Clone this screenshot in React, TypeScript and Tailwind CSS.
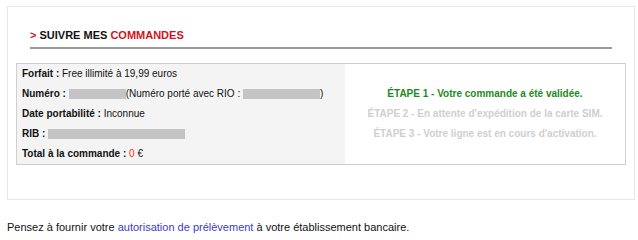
import React from "react";

const Bar = ({ w }: { w: number }) => (
  <span className="inline-block h-[10px] bg-[#c4c4c4] align-[-2px]" style={{ width: w }} />
);

export default function App() {
  return (
    <div className="w-[638px] h-[240px] bg-white pt-[6px] pl-[7px] font-['Liberation_Sans',Arial,sans-serif] text-[10px] text-[#111]">
      <div className="w-[628px] h-[194px] border border-[#e6e6e6] pt-[21px]">
        <div className="mx-[22px] border-b-2 border-[#999] pb-[5px]">
          <div className="text-[11px] font-bold leading-[14px]">
            <span className="text-[#d0141c]">&gt;</span> SUIVRE MES <span className="text-[#d0141c]">COMMANDES</span>
          </div>
        </div>
        <div className="mx-[8px] mt-[14px] border border-[#cfcfcf] flex h-[102px]">
          <div className="w-[328px] bg-[#f4f4f4] pl-[5px] flex flex-col">
            <div className="h-[20px] leading-[20px]"><b>Forfait :</b> Free illimité à 19,99 euros</div>
            <div className="h-[20px] leading-[20px]"><b>Numéro :</b> <Bar w={57} />(Numéro porté avec RIO : <Bar w={77} />)</div>
            <div className="h-[20px] leading-[20px]"><b>Date portabilité :</b> Inconnue</div>
            <div className="h-[20px] leading-[20px]"><b>RIB :</b> <Bar w={137} /></div>
            <div className="h-[20px] leading-[20px]"><b>Total à la commande :</b> <span className="text-[#ff2a2a]">0</span> €</div>
          </div>
          <div className="flex-1 bg-white flex flex-col justify-center items-center font-bold">
            <div className="h-[20px] leading-[20px] text-[#1e8a1e]">ÉTAPE 1 - Votre commande a été validée.</div>
            <div className="h-[20px] leading-[20px] text-[#cfcfcf]">ÉTAPE 2 - En attente d'expédition de la carte SIM.</div>
            <div className="h-[20px] leading-[20px] text-[#cfcfcf]">ÉTAPE 3 - Votre ligne est en cours d'activation.</div>
          </div>
        </div>
      </div>
      <div className="mt-[19px] text-[11px] leading-[16px] text-[#111]">
        Pensez à fournir votre <span className="text-[#3a3ad4]">autorisation de prélèvement</span> à votre établissement bancaire.
      </div>
    </div>
  );
}
